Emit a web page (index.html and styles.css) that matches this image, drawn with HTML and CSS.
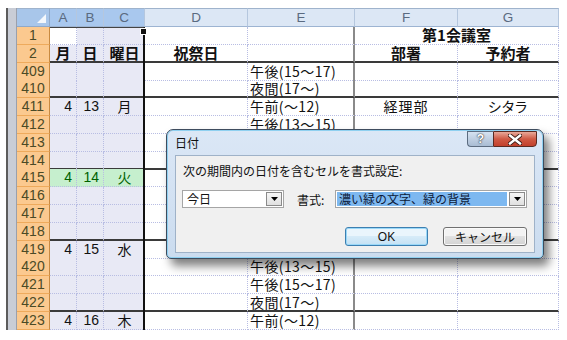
FILE: index.html
```html
<!DOCTYPE html>
<html lang="ja">
<head>
<meta charset="utf-8">
<link rel="stylesheet" href="styles.css">
</head>
<body>
<div class="screen">
  <div class="strip"></div>
  <div class="sheet">
    <div class="row hdr">
      <div class="corner"></div>
      <div class="ch on">A</div><div class="ch on">B</div><div class="ch on">C</div>
      <div class="ch">D</div><div class="ch">E</div><div class="ch">F</div><div class="ch">G</div>
    </div>
    <div class="row">
      <div class="rh">1</div>
      <div class="c act"></div><div class="c s"></div><div class="c s cC"></div>
      <div class="c"></div><div class="c cE"></div><div class="c m b span2">第1会議室</div>
    </div>
    <div class="row sep">
      <div class="rh">2</div>
      <div class="c s m b">月</div><div class="c s m b">日</div><div class="c s m b cC">曜日</div>
      <div class="c m b">祝祭日</div><div class="c cE"></div><div class="c m b">部署</div><div class="c m b">予約者</div>
    </div>
    <div class="row">
      <div class="rh">409</div>
      <div class="c s"></div><div class="c s"></div><div class="c s cC"></div>
      <div class="c"></div><div class="c cE l">午後(15～17)</div><div class="c"></div><div class="c"></div>
    </div>
    <div class="row sep">
      <div class="rh">410</div>
      <div class="c s"></div><div class="c s"></div><div class="c s cC"></div>
      <div class="c"></div><div class="c cE l">夜間(17～)</div><div class="c"></div><div class="c"></div>
    </div>
    <div class="row">
      <div class="rh">411</div>
      <div class="c s r">4</div><div class="c s r">13</div><div class="c s m cC">月</div>
      <div class="c"></div><div class="c cE l">午前(～12)</div><div class="c m p">経理部</div><div class="c m p">シタラ</div>
    </div>
    <div class="row">
      <div class="rh">412</div>
      <div class="c s"></div><div class="c s"></div><div class="c s cC"></div>
      <div class="c"></div><div class="c cE l">午後(13～15)</div><div class="c"></div><div class="c"></div>
    </div>
    <div class="row">
      <div class="rh">413</div>
      <div class="c s"></div><div class="c s"></div><div class="c s cC"></div>
      <div class="c"></div><div class="c cE l">午後(15～17)</div><div class="c"></div><div class="c"></div>
    </div>
    <div class="row sep">
      <div class="rh">414</div>
      <div class="c s"></div><div class="c s"></div><div class="c s cC"></div>
      <div class="c"></div><div class="c cE l">夜間(17～)</div><div class="c"></div><div class="c"></div>
    </div>
    <div class="row">
      <div class="rh">415</div>
      <div class="c g r">4</div><div class="c g r">14</div><div class="c g m cC">火</div>
      <div class="c"></div><div class="c cE l">午前(～12)</div><div class="c"></div><div class="c"></div>
    </div>
    <div class="row">
      <div class="rh">416</div>
      <div class="c s"></div><div class="c s"></div><div class="c s cC"></div>
      <div class="c"></div><div class="c cE l">午後(13～15)</div><div class="c"></div><div class="c"></div>
    </div>
    <div class="row">
      <div class="rh">417</div>
      <div class="c s"></div><div class="c s"></div><div class="c s cC"></div>
      <div class="c"></div><div class="c cE l">午後(15～17)</div><div class="c"></div><div class="c"></div>
    </div>
    <div class="row sep">
      <div class="rh">418</div>
      <div class="c s"></div><div class="c s"></div><div class="c s cC"></div>
      <div class="c"></div><div class="c cE l">夜間(17～)</div><div class="c"></div><div class="c"></div>
    </div>
    <div class="row">
      <div class="rh">419</div>
      <div class="c s r">4</div><div class="c s r">15</div><div class="c s m cC">水</div>
      <div class="c"></div><div class="c cE l">午前(～12)</div><div class="c"></div><div class="c"></div>
    </div>
    <div class="row">
      <div class="rh">420</div>
      <div class="c s"></div><div class="c s"></div><div class="c s cC"></div>
      <div class="c"></div><div class="c cE l">午後(13～15)</div><div class="c"></div><div class="c"></div>
    </div>
    <div class="row">
      <div class="rh">421</div>
      <div class="c s"></div><div class="c s"></div><div class="c s cC"></div>
      <div class="c"></div><div class="c cE l">午後(15～17)</div><div class="c"></div><div class="c"></div>
    </div>
    <div class="row sep">
      <div class="rh">422</div>
      <div class="c s"></div><div class="c s"></div><div class="c s cC"></div>
      <div class="c"></div><div class="c cE l">夜間(17～)</div><div class="c"></div><div class="c"></div>
    </div>
    <div class="row">
      <div class="rh">423</div>
      <div class="c s r">4</div><div class="c s r">16</div><div class="c s m cC">木</div>
      <div class="c"></div><div class="c cE l">午前(～12)</div><div class="c"></div><div class="c"></div>
    </div>
    <div class="selbox"><span class="handle"></span></div>
  </div>

  <div class="dlg">
    <div class="ttl">日付</div>
    <div class="caps">
      <div class="cap help">?</div>
      <div class="cap close">
        <svg width="14" height="11" viewBox="0 0 14 11"><path d="M2 1.5 L12 9.5 M12 1.5 L2 9.5" stroke="#3a1a14" stroke-width="4.2" stroke-linecap="square"/><path d="M2 1.5 L12 9.5 M12 1.5 L2 9.5" stroke="#ffffff" stroke-width="2.4" stroke-linecap="square"/></svg>
      </div>
    </div>
    <div class="panel">
      <div class="msg">次の期間内の日付を含むセルを書式設定:</div>
      <div class="fields">
        <div class="combo w1"><span class="val">今日</span><span class="arr"><svg width="7" height="4" viewBox="0 0 7 4"><path d="M0 0 H7 L3.5 4 Z" fill="#000"/></svg></span></div>
        <div class="lbl">書式:</div>
        <div class="combo w2"><span class="val hl">濃い緑の文字、緑の背景</span><span class="arr"><svg width="7" height="4" viewBox="0 0 7 4"><path d="M0 0 H7 L3.5 4 Z" fill="#000"/></svg></span></div>
      </div>
      <div class="btns">
        <div class="btn def">OK</div>
        <div class="btn">キャンセル</div>
      </div>
    </div>
  </div>
</div>
</body>
</html>
```

FILE: styles.css
```css
body {
  margin: 0;
  background: #fff;
  font-family: "Noto Sans CJK JP", sans-serif;
}

.screen {
  position: relative;
  width: 567px;
  height: 340px;
  overflow: hidden;
  display: flex;
  align-items: flex-start;
  padding: 8px 0 0 6px;
  box-sizing: border-box;
}

.strip {
  width: 11px;
  height: 322px;
  box-sizing: border-box;
  border-left: 2px solid #5c5c5c;
  border-right: 1px solid #9aa0ac;
  background: #c9cdd6;
}

.sheet {
  position: relative;
  width: 542px;
}

.row {
  display: grid;
  grid-template-columns: 33px 27px 27px 41px 103px 107px 103px 101px;
  height: 17.8px;
}

.row.hdr {
  height: 19px;
}

.corner {
  position: relative;
  background: #a8c6ea;
  border-top: 1px solid #9fb3cc;
  border-right: 1px solid #8fa9c9;
  border-bottom: 1px solid #8fa9c9;
  box-sizing: border-box;
}

.corner::after {
  content: "";
  position: absolute;
  right: 3px;
  bottom: 3px;
  width: 0;
  height: 0;
  border-left: 9px solid transparent;
  border-bottom: 9px solid #f4f8fc;
}

.ch {
  background: #dce7f5;
  color: #5a6a80;
  font: 13.5px/17px "Liberation Sans", sans-serif;
  text-align: center;
  border-top: 1px solid #9fb3cc;
  border-right: 1px solid #b5c7de;
  border-bottom: 1px solid #9db4d2;
  box-sizing: border-box;
}

.ch.on {
  background: #a9c8ee;
}

.rh {
  background: #fbc98f;
  border-bottom: 1px solid #eeaa5c;
  border-right: 1px solid #c98a40;
  color: #4b4a26;
  font: 14px/17px "Liberation Sans", sans-serif;
  text-align: center;
  box-sizing: border-box;
}

.c {
  border-right: 1px dotted #b8bde3;
  border-bottom: 1px dotted #b8bde3;
  box-sizing: border-box;
  font-size: 14px;
  line-height: 16.8px;
  white-space: nowrap;
  color: #111;
}

.sep > .c {
  border-bottom: 2px solid #3a3a3a;
  line-height: 16px;
}

.s { background: #e8e9f5; }
.act { background: #fff; }
.g { background: #c6efce; color: #006100; }

.r {
  text-align: right;
  padding-right: 4px;
  font-family: "Liberation Sans", sans-serif;
}

.m { text-align: center; }
.l { padding-left: 2px; letter-spacing: 0.4px; }
.p { font-feature-settings: "palt"; letter-spacing: 1px; }

.b {
  font-weight: bold;
  font-size: 15px;
}

.cE { border-right: 2px solid #8a8a8a; }
.cC { border-right: none; }

.span2 { grid-column: span 2; }

.selbox {
  position: absolute;
  left: 33px;
  top: 19px;
  width: 95px;
  bottom: 0;
  box-sizing: border-box;
  border-top: 1px solid #444;
  border-right: 2px solid #111;
  pointer-events: none;
}

.handle {
  position: absolute;
  right: -4px;
  top: 0;
  width: 5px;
  height: 5px;
  background: #111;
  border: 1px solid #fff;
}

/* dialog */
.dlg {
  position: absolute;
  left: 166px;
  top: 129px;
  width: 378px;
  height: 130px;
  box-sizing: border-box;
  border: 1px solid #3e4c5e;
  border-radius: 7px 7px 5px 5px;
  background: linear-gradient(#dbe7f6, #cbdcef);
  box-shadow: inset 0 0 0 1px #8fd0f0, 5px 7px 10px rgba(0, 0, 0, 0.5);
}

.ttl {
  position: absolute;
  left: 8px;
  top: 5px;
  font-size: 12px;
  line-height: 16px;
  color: #111;
}

.caps {
  position: absolute;
  top: 1px;
  right: 6px;
  display: flex;
}

.cap {
  height: 16px;
  box-sizing: border-box;
  display: flex;
  align-items: center;
  justify-content: center;
}

.help {
  width: 26px;
  border: 1px solid #5c6c80;
  border-right: none;
  border-radius: 0 0 0 4px;
  background: linear-gradient(#d6e2f0, #a9bcd3);
  color: #fff;
  font: bold 12px "Liberation Sans", sans-serif;
  text-shadow: 0 0 2px #333, 0 0 1px #333;
}

.close {
  width: 44px;
  border: 1px solid #5a2a22;
  border-radius: 0 0 4px 0;
  background: linear-gradient(#e8a99a, #cf5a45 50%, #c2402c);
}

.panel {
  position: absolute;
  left: 8px;
  top: 25px;
  width: 360px;
  height: 98px;
  box-sizing: border-box;
  background: #f0f0f0;
  border: 1px solid #9fb2c8;
  padding: 7px 0 0 6px;
  font-size: 12px;
  color: #111;
}

.msg {
  line-height: 16px;
  padding-left: 1px;
}

.fields {
  display: flex;
  align-items: center;
  margin-top: 11px;
}

.combo {
  display: flex;
  height: 18px;
  box-sizing: border-box;
  border: 1px solid #a5a5a5;
  background: #fff;
  padding: 1px;
}

.w1 { width: 102px; }
.w2 { width: 192px; }

.val {
  flex: 1;
  line-height: 14px;
  padding-left: 3px;
}

.val.hl {
  background: #7db8f0;
  color: #0c1838;
  padding-left: 2px;
}

.arr {
  width: 16px;
  margin-left: 2px;
  box-sizing: border-box;
  border: 1px solid #8a8a8a;
  background: linear-gradient(#f6f6f6, #e0e0e0);
  display: flex;
  align-items: center;
  justify-content: center;
}

.lbl {
  width: 38px;
  padding-left: 13px;
}

.btns {
  display: flex;
  gap: 15px;
  margin-top: 19px;
  padding-left: 163px;
}

.btn {
  width: 84px;
  height: 19px;
  box-sizing: border-box;
  border: 1px solid #707070;
  border-radius: 3px;
  background: linear-gradient(#f3f3f3 45%, #e1e1e1 50%, #d3d3d3);
  display: flex;
  align-items: center;
  justify-content: center;
  font-size: 12px;
  box-shadow: inset 0 0 0 1px #fafafa;
}

.btn.def {
  width: 83px;
  border-color: #3c7fb1;
  background: linear-gradient(#eaf5fc 45%, #d6ebf8 50%, #c4e1f4);
  box-shadow: inset 0 0 0 1px #9ad8f8;
  font-family: "Liberation Sans", sans-serif;
}
```
